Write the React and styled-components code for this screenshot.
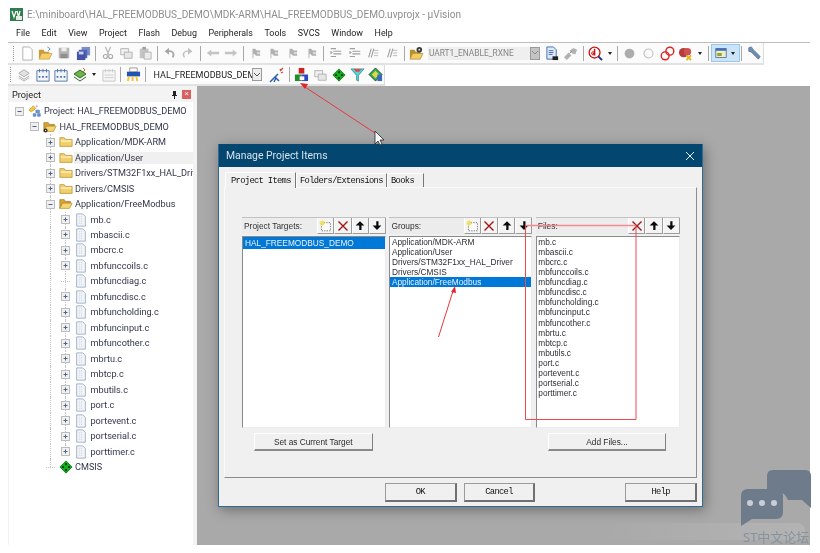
import React from 'react';
import styled, { createGlobalStyle } from 'styled-components';

const GlobalStyle = createGlobalStyle`
  html, body { margin: 0; padding: 0; background: #fff; }
  body { font-family: Roboto, "Open Sans", "Liberation Sans", sans-serif; }
`;

const Page = styled.div`
  position: relative;
  width: 820px;
  height: 553px;
  overflow: hidden;
  background: #fff;
  filter: blur(0.4px);
`;

const Frame = styled.div`
  width: 802px;
  margin-left: 8px;
  display: flex;
  flex-direction: column;
`;

const TitleBar = styled.div`
  height: 25px;
  padding: 3px 0 0 2px;
  box-sizing: border-box;
  display: flex;
  align-items: center;
  gap: 4px;
  color: #8e8e8e;
  font-size: 10.1px;
  white-space: nowrap;
`;

const MenuBar = styled.div`
  height: 18px;
  box-sizing: border-box;
  padding: 0 0 2px 8px;
  display: flex;
  align-items: center;
  gap: 11.6px;
  font-size: 8.9px;
  color: #222;
  border-bottom: 1px solid #bdbdbd;
`;

const ToolRow = styled.div`
  width: ${p => p.$width}px;
  height: ${p => p.$height}px;
  box-sizing: border-box;
  display: flex;
  align-items: center;
  padding-left: ${p => p.$pad}px;
  background: #fbfbfb;
  border-right: 1px solid #dcdcdc;
  border-bottom: 2px solid #e2e2e2;
`;

const Grip = styled.div`
  width: 1px;
  height: 15px;
  margin-right: 4px;
  border-left: 1px dotted #999;
`;

const Tool = styled.div`
  width: ${p => p.$w || 18.6}px;
  height: 18px;
  flex: none;
  display: flex;
  align-items: center;
  justify-content: center;
`;

const Caret = styled.div`
  width: 0;
  height: 0;
  flex: none;
  margin: 0 ${p => p.$m || 3}px 0 ${p => p.$m || 3}px;
  border-left: 2.5px solid transparent;
  border-right: 2.5px solid transparent;
  border-top: 3px solid #222;
`;

const Sep = styled.div`
  width: 1px;
  height: 15px;
  flex: none;
  margin: 0 ${p => p.$m || 2.5}px;
  background: #a8a8a8;
`;

const Highlight = styled.div`
  height: 18px;
  flex: none;
  display: flex;
  align-items: center;
  box-sizing: border-box;
  padding-left: 3px;
  width: 29px;
  background: #cce4f7;
  border: 1px solid #98c8ee;
`;

const Combo = styled.div`
  width: ${p => p.$w}px;
  height: 13px;
  flex: none;
  margin: 0 ${p => p.$mr || 0}px 0 2px;
  display: flex;
  align-items: center;
  justify-content: space-between;
  font-size: ${p => (p.$off ? 8.4 : 9)}px;
  color: ${p => (p.$off ? '#858585' : '#222')};
  background: ${p => (p.$off ? '#efefef' : '#fff')};
  white-space: nowrap;
  overflow: hidden;
`;

const ComboText = styled.span`
  padding-left: ${p => p.$pad}px;
  overflow: hidden;
`;

const ComboArrow = styled.div`
  width: 10px;
  height: 13px;
  flex: none;
  box-sizing: border-box;
  display: flex;
  align-items: center;
  justify-content: center;
  background: ${p => (p.$off ? '#c4c4c4' : '#eeeeee')};
  border: 1px solid #9a9a9a;
`;

const Workspace = styled.div`
  display: flex;
  height: 459px;
`;

const ProjectPanel = styled.div`
  width: 189px;
  flex: none;
  display: flex;
  flex-direction: column;
  box-sizing: border-box;
  padding: 0 4px 0 1px;
  background: #f3f3f3;
`;

const PanelHead = styled.div`
  height: 16px;
  flex: none;
  display: flex;
  align-items: center;
  justify-content: space-between;
  padding: 0 2px 0 3px;
  font-size: 9.2px;
  color: #222;
`;

const PanelTools = styled.div`
  display: flex;
  align-items: center;
  gap: 4px;
`;

const PanelClose = styled.div`
  width: 9px;
  height: 9px;
  display: flex;
  align-items: center;
  justify-content: center;
  background: #d9605f;
  color: #fff;
  font-size: 8px;
  line-height: 1;
  font-family: "Liberation Sans", sans-serif;
`;

const Tree = styled.div`
  flex: 1;
  background: #fff;
  padding-top: 1.5px;
  overflow: hidden;
`;

const TreeRow = styled.div`
  position: relative;
  height: 15.48px;
  display: flex;
  align-items: center;
  padding-left: ${p => 5.5 + p.$level * 15.5}px;
  font-size: 9.15px;
  color: #33364a;
  white-space: nowrap;

  &::before {
    content: ${p => (p.$level >= 2 ? '""' : 'none')};
    position: absolute;
    left: ${p => 9.5 + p.$level * 15.5}px;
    top: 0;
    height: ${p => (p.$last ? '50%' : '100%')};
    border-left: 1px dotted #c4c4c4;
  }

  &::after {
    content: ${p => (p.$level === 3 ? '""' : 'none')};
    position: absolute;
    left: ${9.5 + 31}px;
    top: 0;
    height: 100%;
    border-left: 1px dotted #c4c4c4;
  }
`;

const Expander = styled.div`
  position: relative;
  z-index: 1;
  width: 9px;
  height: 9px;
  flex: none;
  margin-right: 3px;
  box-sizing: border-box;
  display: flex;
  align-items: center;
  justify-content: center;
  background: #f0f0f0;
  border: 1px solid #bdbdbd;
`;

const LeafStub = styled.div`
  position: relative;
  z-index: 1;
  width: 9px;
  height: 1px;
  flex: none;
  margin-right: 3px;
  border-top: 1px dotted #c4c4c4;
  box-sizing: border-box;
  padding-left: 4px;
`;

const TreeIcon = styled.div`
  width: 16px;
  height: 14px;
  flex: none;
  margin-right: 1.5px;
  display: flex;
  align-items: center;
  justify-content: center;
`;

const TreeLabel = styled.span`
  padding: 1px 2px 1px 1px;
  margin-left: -1px;
  flex: ${p => (p.$selected ? 1 : 'none')};
  background: ${p => (p.$selected ? '#f0f0f0' : 'transparent')};
`;

const GrayArea = styled.div`
  flex: 1;
  background: #a9a9a9;
  padding: 58px 0 0 21px;
`;

const Dialog = styled.div`
  width: 485px;
  height: 363px;
  box-sizing: border-box;
  display: flex;
  flex-direction: column;
  background: #f0f0f0;
  border: 1px solid #2f6a92;
  border-top: none;
  box-shadow: 2px 3px 12px rgba(0, 0, 0, 0.35);
`;

const DialogHead = styled.div`
  height: 23px;
  flex: none;
  display: flex;
  align-items: center;
  justify-content: space-between;
  padding: 0 7px;
  background: #03466f;
  color: #d7e2ea;
  font-size: 10.4px;
`;

const Tabs = styled.div`
  display: flex;
  height: 15px;
  margin: 5px 0 0 6px;
  flex: none;
`;

const Tab = styled.div`
  box-sizing: border-box;
  width: ${p => p.$w}px;
  height: ${p => (p.$active ? 16 : 14)}px;
  margin-top: ${p => (p.$active ? 0 : 1)}px;
  padding-left: ${p => (p.$active ? 5 : 3)}px;
  display: flex;
  align-items: center;
  font-family: "Liberation Mono", monospace;
  font-size: 8.8px;
  letter-spacing: -0.68px;
  color: #111;
  white-space: nowrap;
  border-top: 1px solid #fdfdfd;
  border-left: 1px solid #fdfdfd;
  border-right: 1px solid #777;
  position: relative;
  z-index: 1;
  background: #f0f0f0;
`;

const TabPanel = styled.div`
  margin: 0 5px 0 5px;
  height: 291px;
  flex: none;
  box-sizing: border-box;
  padding: 29px 0 0 17px;
  border-top: 1px solid #fafafa;
  border-left: 1px solid #fafafa;
  border-right: 1px solid #8c8c8c;
  border-bottom: 1px solid #8c8c8c;
`;

const Columns = styled.div`
  display: grid;
  grid-template-columns: 144px 143px 144px;
  column-gap: 3.4px;
`;

const ListHead = styled.div`
  height: 17px;
  box-sizing: border-box;
  display: flex;
  align-items: center;
  justify-content: space-between;
  padding-left: 2px;
  border-top: 1px solid #c2c2c2;
  font-family: "Liberation Sans", sans-serif;
  font-size: 8.4px;
  color: #333;
  background: #ececec;
`;

const HeadTools = styled.div`
  display: flex;
`;

const HeadButton = styled.div`
  width: 17.2px;
  height: 16px;
  box-sizing: border-box;
  display: flex;
  align-items: center;
  justify-content: center;
  background: #f4f4f4;
  border-right: 1px solid #9c9c9c;
  border-bottom: 1px solid #9c9c9c;
  border-left: 1px solid #fff;
`;

const ListBox = styled.div`
  margin-top: 2px;
  height: 192px;
  box-sizing: border-box;
  background: #fff;
  border-top: 1px solid #8a8a8a;
  border-left: 1px solid #8a8a8a;
  border-right: 1px solid #ececec;
  border-bottom: 1px solid #ececec;
  font-family: "Liberation Sans", sans-serif;
  font-size: 8.3px;
  color: #2d2d35;
`;

const ListItem = styled.div`
  height: 10.07px;
  line-height: 10.07px;
  padding-left: ${p => (p.$target ? 2 : 1.5)}px;
  white-space: nowrap;
  background: ${p => (p.$selected ? '#0078d7' : 'transparent')};
  color: ${p => (p.$selected ? '#e8f2fb' : 'inherit')};
  ${p => p.$target && 'height: 12px; line-height: 12px;'}
`;

const ColumnFoot = styled.div`
  height: 30px;
  padding-top: 5px;
  box-sizing: border-box;
  display: flex;
`;

const RaisedButton = styled.div`
  width: 118.5px;
  height: 18px;
  margin-left: ${p => p.$ml || 0}px;
  box-sizing: border-box;
  display: flex;
  align-items: center;
  justify-content: center;
  font-family: "Liberation Sans", sans-serif;
  font-size: 8.3px;
  color: #2a2a2a;
  background: #f0f0f0;
  border-top: 1px solid #fff;
  border-left: 1px solid #fff;
  border-right: 1px solid #808080;
  border-bottom: 2px solid #8a8a8a;
`;

const DialogFoot = styled.div`
  display: flex;
  padding: 5px 5px 0 166px;
`;

const MonoButton = styled.div`
  width: 72px;
  height: 19px;
  margin-right: ${p => p.$mr || 0}px;
  box-sizing: border-box;
  display: flex;
  align-items: center;
  justify-content: center;
  font-family: "Liberation Mono", monospace;
  font-size: 8.8px;
  letter-spacing: -0.68px;
  color: #111;
  background: #f0f0f0;
  border: 1px solid #9a9a9a;
  border-right: 2px solid #707070;
  border-bottom: 2px solid #707070;
`;

// the red marks someone drew on the screenshot, plus cursor and forum watermark
const Annotations = styled.svg`
  position: absolute;
  left: 0;
  top: 0;
  pointer-events: none;
`;

const WatermarkStrip = styled.div`
  position: absolute;
  left: 600px;
  top: 523px;
  width: 205px;
  height: 17px;
  background: linear-gradient(90deg, rgba(255,255,255,0), rgba(255,255,255,0.12));
  border-radius: 0 8px 8px 0;
`;

const WatermarkText = styled.div`
  position: absolute;
  left: 743px;
  top: 529px;
  width: 67px;
  overflow: hidden;
  white-space: nowrap;
  font-family: "Noto Sans", "Noto Sans CJK SC", sans-serif;
  font-size: 13px;
  line-height: 16px;
  color: #87929f;
`;

const Svg = ({ w = 14, h = 14, children }) => (
  <svg width={w} height={h} viewBox="0 0 16 16">{children}</svg>
);

const Flag = () => (
  <Svg><path d="M4 14V3h3l2 2h4l-1 3 1 3H8L6 9H5v5z" fill="#b2b2b2" /><path d="M9 7h3v2H9z" fill="#dedede" /></Svg>
);
const Lines = ({ slant }) => (
  <Svg>
    <path d={slant ? 'M3 13l3-10M6 13l3-10' : 'M2 3h6M5 6h9M5 9h9M2 12h6'} stroke="#a0a0a0" strokeWidth="1.3" fill="none" />
    <path d={slant ? 'M9 5h5M9 8h5M9 11h5' : 'M2 6l2 1.5L2 9z'} stroke="#b5b5b5" fill="#a0a0a0" />
  </Svg>
);
const Stack = () => (
  <Svg><path d="M2 3h9v7H2z" fill="#f0f0f0" stroke="#b0b0b0" /><path d="M6 7h9v7H6z" fill="#e6e6e6" stroke="#b0b0b0" /></Svg>
);
const GreenDiamond = ({ size = 14 }) => (
  <Svg w={size} h={size}>
    <path d="M8 1l7 7-7 7-7-7z" fill="#0fae1c" stroke="#045c0c" strokeWidth=".8" />
    <circle cx="8" cy="4.6" r="1" fill="#000" /><circle cx="8" cy="11.4" r="1" fill="#000" />
    <circle cx="4.6" cy="8" r="1" fill="#000" /><circle cx="11.4" cy="8" r="1" fill="#000" />
  </Svg>
);
const OpenFolder = ({ gear }) => (
  <Svg>
    <path d="M1 13V3h5l1 2h6v2H4z" fill="#d9a634" stroke="#9c7420" strokeWidth=".8" />
    <path d="M1 13l3-6h11l-3 6z" fill="#f5d675" stroke="#b98c2a" strokeWidth=".8" />
    {gear && <circle cx="3" cy="12" r="2.2" fill="#222" />}
    {gear && <circle cx="3" cy="12" r=".8" fill="#fff" />}
  </Svg>
);
const ClosedFolder = () => (
  <Svg>
    <path d="M1 13V3h5l1 2h8v8z" fill="#f3cf6c" stroke="#b58a2c" strokeWidth=".8" />
    <path d="M2 6h12v2H2z" fill="#fbeaae" />
  </Svg>
);
const FileGlyph = () => (
  <Svg>
    <path d="M3 1h7l3 3v11H3z" fill="#f2f4f7" stroke="#8da3c0" strokeWidth=".9" />
    <path d="M6 4h3M6 6h4M6 8h4M6 10h4M6 12h4" stroke="#ccd0d6" strokeWidth="1" strokeDasharray="1 1" />
  </Svg>
);
const ProjectGlyph = () => (
  <Svg>
    <path d="M1 7l5-5 3 3-5 4z" fill="#f0c93a" stroke="#a98a1e" strokeWidth=".6" />
    <path d="M10 1v3M8.5 2.5h3" stroke="#d8a8e0" />
    <path d="M9 7h4v3h-4zM6 11h3v3H6zM11 11h3v3h-3z" fill="#6a9ad8" stroke="#3b62a0" strokeWidth=".6" />
  </Svg>
);
const NewGroup = () => (
  <Svg w={13} h={13}>
    <path d="M3 4.5h11v10H3z" fill="#fbfbfb" stroke="#555" strokeDasharray="1.5 1.5" />
    <path d="M4 1l1 2 2-1-1 2 2 1-2 1 1 2-2-1-1 2-1-2-2 1 1-2-2-1 2-1-1-2 2 1z" fill="#efe05a" />
  </Svg>
);
const RedCross = () => (
  <Svg w={12} h={12}><path d="M2 2l12 12M14 2L2 14" stroke="#a31414" strokeWidth="1.8" /></Svg>
);
const Up = () => (
  <Svg w={10} h={11}><path d="M8 1l7 7h-4.6v7H6.800V8H1z" fill="#0b0b0b" /></Svg>
);
const Down = () => (
  <Svg w={10} h={11}><path d="M8 15l7-7h-4.600V1H6.800v7H1z" fill="#0b0b0b" /></Svg>
);
const Plus = ({ open }) => (
  <svg width="7" height="7" viewBox="0 0 7 7">
    <path d={open ? 'M1.500 3.500h4' : 'M1.500 3.500h4M3.500 1.500v4'} stroke="#4f6288" strokeWidth="1" />
  </svg>
);
const DropDown = ({ off }) => (
  <svg width="8" height="6" viewBox="0 0 8 6"><path d="M1 1l3 3 3-3" stroke={off ? '#8c8c8c' : '#555'} fill="none" /></svg>
);

const TOP_ICONS = {
  new: <Svg w={15} h={15}><path d="M3 1h7l3 3v11H3z" fill="#fff" stroke="#b0b0b0" /></Svg>,
  open: <Svg w={15} h={15}><path d="M1 14V4h5l1 2h5v2H4z" fill="#c99a36" /><path d="M1 14l3-6h11l-3 6z" fill="#f5cf6a" stroke="#c29333" strokeWidth=".6" /><path d="M10 1l3 2-2 2" stroke="#5a8fce" fill="none" /></Svg>,
  save: <Svg><path d="M2 2h12v12H2z" fill="#b5b5b5" /><path d="M5 2h6v4H5z" fill="#ececec" /><path d="M4 9h8v5H4z" fill="#8e8e8e" /></Svg>,
  saveAll: <Svg w={15} h={15}><path d="M6 1h9v9H6z" fill="#7a8ecb" /><path d="M3 4h9v9H3z" fill="#5666b5" /><path d="M1 6h9v9H1z" fill="#4652a8" /><path d="M3 6h5v3H3z" fill="#c8d0ee" /></Svg>,
  cut: <Svg><path d="M5 1l4 9M11 1l-4 9" stroke="#bdbdbd" strokeWidth="1.5" /><circle cx="5" cy="12" r="2.300" fill="none" stroke="#aaa" strokeWidth="1.300" /><circle cx="11" cy="12" r="2.300" fill="none" stroke="#aaa" strokeWidth="1.300" /></Svg>,
  copy: <Stack />,
  paste: <Svg><path d="M2 3h10v11H2z" fill="#c4c4c4" /><path d="M5 1h4v3H5z" fill="#9e9e9e" /><path d="M7 7h8v8H7z" fill="#ebebeb" stroke="#b0b0b0" /></Svg>,
  undo: <Svg><path d="M12 13c3-4 0-8-5-7" stroke="#a8a8a8" strokeWidth="2" fill="none" /><path d="M8 2L3 6l5 4z" fill="#a8a8a8" /></Svg>,
  redo: <Svg><path d="M4 13C1 9 4 5 9 6" stroke="#c0c0c0" strokeWidth="1.600" fill="none" /><path d="M8 2l5 4-5 4z" fill="#c0c0c0" /></Svg>,
  back: <Svg><path d="M1 8l5-4v2.500h9v3H6V12z" fill="#c4c4c4" /></Svg>,
  fwd: <Svg><path d="M15 8l-5-4v2.500H1v3h9V12z" fill="#c4c4c4" /></Svg>,
  flag: <Flag />,
  lines: <Lines />,
  slant: <Lines slant />,
  openGear: <Svg w={15} h={15}><path d="M1 14V4h5l1 2h5v2H4z" fill="#b88f2b" /><path d="M1 14l3-6h11l-3 6z" fill="#f2cd63" stroke="#9c7a22" strokeWidth=".6" /><circle cx="11" cy="4" r="3" fill="#3a3a3a" /><circle cx="11" cy="4" r="1" fill="#ddd" /></Svg>,
  docFind: <Svg w={15} h={15}><path d="M2 1h7l3 3v10H2z" fill="#dfe9f8" stroke="#3f6db5" /><path d="M4 5h5M4 7h5M4 9h4" stroke="#3f6db5" /><path d="M8 11h6v4H8z" fill="#222" /></Svg>,
  tools: <Svg w={15} h={15}><path d="M1 12l5-5 3 3-5 5zM7 5l4-3 4 2-2 5-3-1z" fill="#b2b2b2" /><path d="M7 8l3-3" stroke="#888" /></Svg>,
  inspect: <Svg w={15} h={15}><circle cx="7" cy="7" r="5.800" fill="#fff" stroke="#c11" strokeWidth="1.400" /><path d="M7 3v7M5 8h2" stroke="#c11" strokeWidth="1.600" /><circle cx="5.500" cy="7.800" r="1.700" fill="none" stroke="#c11" /><path d="M11 11l4 4" stroke="#20308a" strokeWidth="2" /></Svg>,
  dotFull: <Svg w={13} h={13}><circle cx="8" cy="8" r="6" fill="#adadad" /></Svg>,
  dotEmpty: <Svg w={13} h={13}><circle cx="8" cy="8" r="5.500" fill="#fbfbfb" stroke="#c0c0c0" strokeWidth="1.300" /></Svg>,
  dotRed: <Svg w={15} h={15}><circle cx="5.500" cy="10.500" r="4.200" fill="none" stroke="#d22" strokeWidth="1.500" /><circle cx="10.500" cy="5.500" r="4.200" fill="none" stroke="#d22" strokeWidth="1.500" /></Svg>,
  dotKill: <Svg w={15} h={15}><circle cx="6" cy="7" r="5" fill="#b83a3a" /><circle cx="10" cy="6" r="4" fill="#cf5050" /><path d="M9 10l5 5M14 10l-5 5" stroke="#e0b820" strokeWidth="2" /></Svg>,
  windowBar: <Svg><path d="M1 2h14v12H1z" fill="#f3edc0" stroke="#3c5d99" /><path d="M1 2h14v3H1z" fill="#3c6ebd" /><path d="M3 8h6v4H3z" fill="#8ea33c" /></Svg>,
  wrench: <Svg w={14} h={14}><path d="M2 2l3-1 2 3 8 8-2 3-8-8-3-1z" fill="#6f8fb4" stroke="#3f5a7c" strokeWidth=".7" /></Svg>,
  translate: <Svg><path d="M2 6l6-4 6 4-6 4z" fill="#e2e2e2" stroke="#a8a8a8" /><path d="M2 9l6 4 6-4M2 11l6 4 6-4" stroke="#a8a8a8" fill="none" /></Svg>,
  build: <Svg><path d="M1 3h14v12H1z" fill="#f2f6fb" stroke="#4a6ea6" /><path d="M4 1v4M8 1v4M12 1v4" stroke="#4a6ea6" /><path d="M3 9h2v2H3zM7 9h2v2H7zM11 9h2v2h-2z" fill="#4a6ea6" /></Svg>,
  batch: <Svg w={16} h={16}><path d="M2 7l6-4 6 4-6 4z" fill="#6fb34a" stroke="#2f6d26" /><path d="M2 10l6 4 6-4" stroke="#2f6d26" fill="none" /><path d="M11 1l2 2-2 2" stroke="#c0692a" fill="none" /></Svg>,
  batchGray: <Svg><path d="M1 3h14v12H1z" fill="#f5f5f5" stroke="#c4c4c4" /><path d="M4 1v4M8 1v4M12 1v4M3 8h10M3 11h10" stroke="#cccccc" /></Svg>,
  load: <Svg w={15} h={15}><path d="M1 5h14v5H1z" fill="#1f55b8" /><path d="M3 10l-1 5M7 10v5M11 10l1 5" stroke="#f2c52a" strokeWidth="2" /><path d="M4 1h8v4H4z" fill="#fff" stroke="#333" strokeWidth=".5" /></Svg>,
  wand: <Svg w={16} h={16}><path d="M1 15l8-8M5 15l2-4 3 3" stroke="#2a5cae" strokeWidth="1.500" fill="none" /><path d="M11 2l1 2M14 5l-2 1M14 1l-3 3" stroke="#d0452c" strokeWidth="1.200" /></Svg>,
  components: <Svg w={15} h={15}><path d="M5 1h6v6H5z" fill="#cc2323" /><path d="M1 8h7v7H1z" fill="#1f8f2d" /><path d="M8 8h7v7H8z" fill="#2b47c6" /><path d="M6 10h5v4H6z" fill="#fff" /></Svg>,
  funnel: <Svg w={15} h={15}><path d="M1 2h14L9 9v6l-2-1V9z" fill="#55d3d8" stroke="#2e8e94" strokeWidth=".8" /><path d="M4 2h8l-2 3H6z" fill="#e04b4b" /></Svg>,
  multi: <Svg w={15} h={15}><path d="M8 1l7 7-7 7-7-7z" fill="#27b34a" stroke="#111" strokeWidth=".7" /><path d="M8 4l4 4-4 4-4-4z" fill="#e6d24f" /><path d="M10 8h5v7h-5z" fill="#3a68c8" /></Svg>,
};

const topBar = [
  'new', 'open', 'save', 'saveAll', '|', 'cut', 'copy', 'paste', '|', 'undo', 'redo', '|', 'back', 'fwd', '|',
  'flag', 'flag', 'flag', 'flag', '|', 'lines', 'lines', 'slant', 'slant', '|', 'openGear',
];
const topBarEnd = ['docFind', 'tools', '|', 'inspect', 'v', '|', 'dotFull', 'dotEmpty', 'dotRed', 'dotKill', 'v', '|'];

const renderTools = list =>
  list.map((name, i) => {
    if (name === '|') return <Sep key={i} />;
    if (name === 'v') return <Caret key={i} />;
    return <Tool key={i}>{TOP_ICONS[name]}</Tool>;
  });

const files = [
  'mb.c', 'mbascii.c', 'mbcrc.c', 'mbfunccoils.c', 'mbfuncdiag.c', 'mbfuncdisc.c', 'mbfuncholding.c',
  'mbfuncinput.c', 'mbfuncother.c', 'mbrtu.c', 'mbtcp.c', 'mbutils.c', 'port.c', 'portevent.c',
  'portserial.c', 'porttimer.c',
];
const groups = ['Application/MDK-ARM', 'Application/User', 'Drivers/STM32F1xx_HAL_Driver', 'Drivers/CMSIS', 'Application/FreeModbus'];
const menus = ['File', 'Edit', 'View', 'Project', 'Flash', 'Debug', 'Peripherals', 'Tools', 'SVCS', 'Window', 'Help'];

const treeRows = [
  { level: 0, label: 'Project: HAL_FREEMODBUS_DEMO', icon: <ProjectGlyph />, open: true },
  { level: 1, label: 'HAL_FREEMODBUS_DEMO', icon: <OpenFolder gear />, open: true },
  { level: 2, label: 'Application/MDK-ARM', icon: <ClosedFolder /> },
  { level: 2, label: 'Application/User', icon: <ClosedFolder />, selected: true },
  { level: 2, label: 'Drivers/STM32F1xx_HAL_Driver', icon: <ClosedFolder /> },
  { level: 2, label: 'Drivers/CMSIS', icon: <ClosedFolder /> },
  { level: 2, label: 'Application/FreeModbus', icon: <OpenFolder />, open: true },
  ...files.map(name => ({
    level: 3,
    label: name,
    icon: <FileGlyph />,
    leaf: name === 'mbfuncdiag.c',
    last: name === 'porttimer.c',
  })),
  { level: 2, label: 'CMSIS', icon: <GreenDiamond />, leaf: true, last: true },
];

const ProjectTree = () => (
  <Tree>
    {treeRows.map(row => (
      <TreeRow key={row.label + row.level} $level={row.level} $last={row.last}>
        {row.leaf ? <LeafStub /> : <Expander><Plus open={row.open} /></Expander>}
        <TreeIcon>{row.icon}</TreeIcon>
        <TreeLabel $selected={row.selected}>{row.label}</TreeLabel>
      </TreeRow>
    ))}
  </Tree>
);

const ListColumn = ({ title, withNew, items, selected, target }) => (
  <div>
    <ListHead>
      <span>{title}</span>
      <HeadTools>
        {withNew && <HeadButton><NewGroup /></HeadButton>}
        <HeadButton><RedCross /></HeadButton>
        <HeadButton><Up /></HeadButton>
        <HeadButton><Down /></HeadButton>
      </HeadTools>
    </ListHead>
    <ListBox>
      {items.map(item => (
        <ListItem key={item} $selected={item === selected} $target={target}>{item}</ListItem>
      ))}
    </ListBox>
  </div>
);

export default function App() {
  return (
    <Page>
      <GlobalStyle />
      <Frame>
        <TitleBar>
          <svg width="13" height="13" viewBox="0 0 13 13">
            <rect width="13" height="13" fill="#2f7d4f" />
            <path d="M2 3l2 6 2-6M7 3l1.500 6L10 3" stroke="#fff" strokeWidth="1.200" fill="none" />
            <rect x="6" y="8" width="6" height="4" fill="#e8e8e8" />
          </svg>
          E:\miniboard\HAL_FREEMODBUS_DEMO\MDK-ARM\HAL_FREEMODBUS_DEMO.uvprojx - µVision
        </TitleBar>
        <MenuBar>
          {menus.map(m => <span key={m}>{m}</span>)}
        </MenuBar>
        <ToolRow $width={756} $height={22} $pad={5}>
          <Grip />
          {renderTools(topBar)}
          <Combo $w={112} $mr={3} $off>
            <ComboText $pad={1}>UART1_ENABLE_RXNE</ComboText>
            <ComboArrow $off><DropDown off /></ComboArrow>
          </Combo>
          {renderTools(topBarEnd)}
          <Highlight>
            {TOP_ICONS.windowBar}
            <Caret $m={4} />
          </Highlight>
          <Sep $m={1} />
          <Tool $w={22}>{TOP_ICONS.wrench}</Tool>
        </ToolRow>
        <ToolRow $width={377} $height={21} $pad={2}>
          <Grip />
          <Tool>{TOP_ICONS.translate}</Tool>
          <Tool>{TOP_ICONS.build}</Tool>
          <Tool>{TOP_ICONS.build}</Tool>
          <Tool>{TOP_ICONS.batch}</Tool>
          <Caret />
          <Tool>{TOP_ICONS.batchGray}</Tool>
          <Sep />
          <Tool>{TOP_ICONS.load}</Tool>
          <Sep />
          <Combo $w={111} $mr={6}>
            <ComboText $pad={3}>HAL_FREEMODBUS_DEM</ComboText>
            <ComboArrow><DropDown /></ComboArrow>
          </Combo>
          <Tool>{TOP_ICONS.wand}</Tool>
          <Sep />
          <Tool>{TOP_ICONS.components}</Tool>
          <Tool><Stack /></Tool>
          <Tool><GreenDiamond /></Tool>
          <Tool>{TOP_ICONS.funnel}</Tool>
          <Tool>{TOP_ICONS.multi}</Tool>
        </ToolRow>
        <Workspace>
          <ProjectPanel>
            <PanelHead>
              Project
              <PanelTools>
                <svg width="7" height="9" viewBox="0 0 7 9"><path d="M2 1h3v4h1v1H4v3H3V6H1V5h1z" fill="#222" /></svg>
                <PanelClose>×</PanelClose>
              </PanelTools>
            </PanelHead>
            <ProjectTree />
          </ProjectPanel>
          <GrayArea>
            <Dialog>
              <DialogHead>
                Manage Project Items
                <svg width="10" height="10" viewBox="0 0 10 10"><path d="M1 1l8 8M9 1L1 9" stroke="#e6eef4" strokeWidth="1" /></svg>
              </DialogHead>
              <Tabs>
                <Tab $w={71} $active>Project Items</Tab>
                <Tab $w={91}>Folders/Extensions</Tab>
                <Tab $w={37}>Books</Tab>
              </Tabs>
              <TabPanel>
                <Columns>
                  <ListColumn title="Project Targets:" withNew items={['HAL_FREEMODBUS_DEMO']} selected="HAL_FREEMODBUS_DEMO" target />
                  <ListColumn title="Groups:" withNew items={groups} selected="Application/FreeModbus" />
                  <ListColumn title="Files:" items={files} />
                  <ColumnFoot><RaisedButton $ml={12}>Set as Current Target</RaisedButton></ColumnFoot>
                  <ColumnFoot />
                  <ColumnFoot><RaisedButton $ml={12}>Add Files...</RaisedButton></ColumnFoot>
                </Columns>
              </TabPanel>
              <DialogFoot>
                <MonoButton $mr={7}>OK</MonoButton>
                <MonoButton $mr={90}>Cancel</MonoButton>
                <MonoButton>Help</MonoButton>
              </DialogFoot>
            </Dialog>
          </GrayArea>
        </Workspace>
      </Frame>

      <WatermarkStrip />
      <WatermarkText>ST中文论坛</WatermarkText>
      <Annotations width="820" height="553" viewBox="0 0 820 553">
        <path d="M375 133L305 87" stroke="#e8383d" strokeWidth="1" />
        <path d="M300 83l8 1-3 5z" fill="#e8222a" />
        <path d="M438.500 337L453 291" stroke="#e8383d" strokeWidth="1" />
        <path d="M455 286l1 7-5-1z" fill="#e8222a" />
        <path d="M525.500 225.500H636" stroke="#f28a8f" strokeWidth="1.500" />
        <path d="M525.500 225.500V419.500H636V225.500" stroke="#ee4a50" fill="none" strokeWidth="1" />
        <path d="M375 131v13l3-3 2 4 2-1-2-4h4z" fill="#fff" stroke="#222" strokeWidth=".8" />
        <path d="M767 476q0-6 6-6h32q6 0 6 6v32l-9-8h-14q-3-8-14-10h-7z" fill="#6e7b8b" />
        <path d="M741 496q0-7 7-7h28q7 0 7 7v16q0 7-7 7h-24l-11 7z" fill="#6e7b8b" />
        <circle cx="750" cy="503" r="3" fill="#c9ced6" />
        <circle cx="762" cy="503" r="3" fill="#c9ced6" />
        <circle cx="774" cy="503" r="3" fill="#c9ced6" />
      </Annotations>
    </Page>
  );
}
